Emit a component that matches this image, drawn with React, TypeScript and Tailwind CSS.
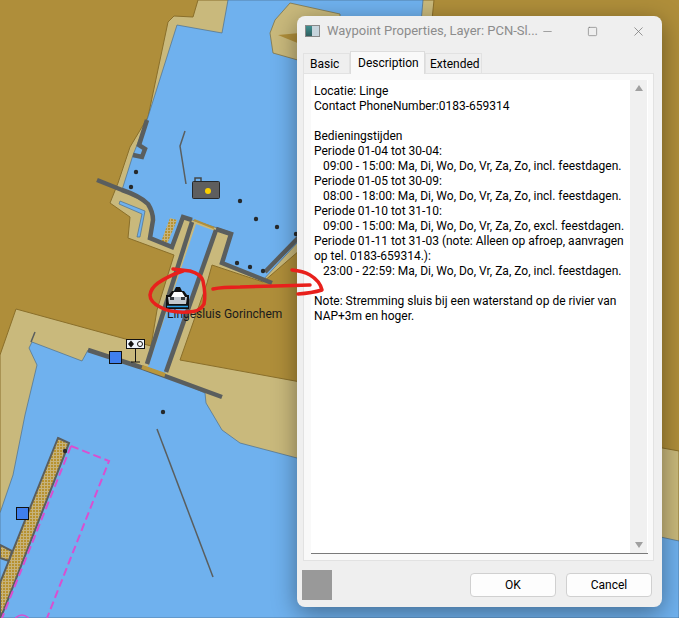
import { Minus, Square, X } from "lucide-react"

const lines = [
  "Locatie: Linge",
  "Contact PhoneNumber:0183-659314",
  "",
  "Bedieningstijden",
  "Periode 01-04 tot 30-04:",
  "   09:00 - 15:00: Ma, Di, Wo, Do, Vr, Za, Zo, incl. feestdagen.",
  "Periode 01-05 tot 30-09:",
  "   08:00 - 18:00: Ma, Di, Wo, Do, Vr, Za, Zo, incl. feestdagen.",
  "Periode 01-10 tot 31-10:",
  "   09:00 - 15:00: Ma, Di, Wo, Do, Vr, Za, Zo, excl. feestdagen.",
  "Periode 01-11 tot 31-03 (note: Alleen op afroep, aanvragen",
  "op tel. 0183-659314.):",
  "   23:00 - 22:59: Ma, Di, Wo, Do, Vr, Za, Zo, incl. feestdagen.",
  "",
  "Note: Stremming sluis bij een waterstand op de rivier van",
  "NAP+3m en hoger.",
]

const dots = [
  [136, 172], [131, 187], [240, 201], [256, 219], [277, 227], [296, 234],
  [237, 263], [250, 267], [263, 271], [163, 412], [65, 451],
]

function ChartMap() {
  return (
    <svg width="679" height="618" viewBox="0 0 679 618" className="block">
      <defs>
        <pattern id="dredge" width="3" height="3" patternUnits="userSpaceOnUse">
          <rect width="3" height="3" fill="#c6b37c" />
          <rect width="2" height="2" fill="#b8922f" />
        </pattern>
      </defs>
      <rect width="679" height="618" fill="#af8e3a" />

      {/* sand banks */}
      <path
        d="M198 0 L193 17 L174 16 L168 22 L148 117 L130 147 L118 183 L110 203 L130 217 L128 238 L174 255 L157 310 L151 346 L16 309 L0 355 L0 618 L60 618 L222 450 L297 475 L679 560 L679 451 L180 360 L207 283 L212 265 L263 282 L300 250 L425 90 L434 0 Z"
        fill="#c9b97c"
        stroke="#8a6f2a"
        strokeWidth="1"
      />

      {/* water */}
      <path
        d="M228 0 L222 33 L177 25 L147 120 L133 155 L122 190 L150 205 L153 220 L150 238 L172 247 L183 217 L230 232 L222 263 L263 280 L320 218 L416 80 L423 0 Z"
        fill="#6fb1ee"
        stroke="#4c6f8c"
        strokeWidth="0.7"
      />
      <path d="M290 3 L275 20 L270 33 L273 53 L340 72 L340 14 Z" fill="#c9b97c" stroke="#7a6a3a" strokeWidth="0.7" />
      <path d="M278 35 L300 33 L300 44 Z" fill="#af8e3a" />
      <path d="M196 224 L215 231 L165 374 L148 367 Z" fill="#6fb1ee" />
      <path
        d="M32 342 L29 348 L37 365 L25 415 L13 475 L0 513 L0 618 L679 618 L679 541 L297 458 L240 443 L222 430 L206 403 L205 393 L165 375 L140 367 L88 350 L82 361 Z"
        fill="#6fb1ee"
        stroke="#4c6f8c"
        strokeWidth="0.7"
      />
      <path d="M120 201 L145 211 L140 237 L137 237 L142 214 L119 204 Z" fill="#6fb1ee" stroke="#4c6f8c" strokeWidth="0.7" />

      {/* dredged strips */}
      <path d="M0 545 L12 551 L9 561 L0 558 Z" fill="url(#dredge)" stroke="#5a5e5e" strokeWidth="2" />
      <path d="M58 438 L69 443 L3 612 L0 618 L0 583 Z" fill="url(#dredge)" stroke="#5a5e5e" strokeWidth="2" />
      <path d="M170 218 L177 220 L167 244 L161 242 Z" fill="url(#dredge)" />

      {/* quay walls */}
      <g fill="none" stroke="#5a5e5e" strokeWidth="4.500">
        <path d="M147 120 L139 145 L145 149 L142 157 L133 155" />
        <path d="M97 180 L122 190 Q140 196 148 204 Q153 212 153 220 L150 238 L172 247 L183 217 L192 220" />
        <path d="M192 222 L147 364" />
        <path d="M216 230 L166 372" />
        <path d="M216 229 L231 234 L222 263 L272 283" />
        <path d="M265 272 L300 236" />
        <path d="M88 350 L140 367 L222 397" />
      </g>
      <path d="M194 220 L214 228" stroke="#b08f3a" strokeWidth="2" />
      <path d="M142 367 L165 375" stroke="#b9973d" strokeWidth="4" />
      <path d="M35 332 L31 342" stroke="#5a5e5e" strokeWidth="1.500" />
      <path d="M185 131 L180 146 L186 184" fill="none" stroke="#5a5e5e" strokeWidth="1.500" />
      <path d="M157 429 L213 577" stroke="#5a5e5e" strokeWidth="1.500" />

      {dots.map(([cx, cy]) => (
        <circle key={`${cx}-${cy}`} cx={cx} cy={cy} r="2.200" fill="#26292b" />
      ))}

      {/* restricted area */}
      <path d="M71 446 L109 461 L47 618 M71 446 L2 618" fill="none" stroke="#d94fd0" strokeWidth="2" strokeDasharray="8 4" />
      <circle cx="22" cy="623" r="8" fill="none" stroke="#d94fd0" strokeWidth="1.500" />

      {/* camera symbol */}
      <path d="M195 182 V178 H201 V182" fill="none" stroke="#44484a" strokeWidth="1.500" />
      <rect x="192.500" y="181.500" width="27" height="17" rx="1" fill="#5e5e5e" stroke="#26292b" />
      <circle cx="208" cy="191" r="3" fill="#fbd000" />

      {/* blue squares */}
      <rect x="109.500" y="351.500" width="12" height="12" fill="#3f7fee" stroke="#111" />
      <rect x="16.500" y="507.500" width="12" height="12" fill="#3f7fee" stroke="#111" />

      {/* topmark */}
      <path d="M135.500 348 V362 M131 362 H140" stroke="#111" strokeWidth="1" />
      <rect x="126.500" y="339.500" width="18" height="9" fill="#eef4fa" stroke="#111" />
      <path d="M131 340.500 L134 344 L131 347.500 L128 344 Z" fill="#111" />
      <circle cx="140" cy="344" r="2.500" fill="#fff" stroke="#111" />

      {/* ship */}
      <path d="M166 309 V295 H169 L172 291 H174 L176 287 H180 L182 291 H184 L187 295 H189 V309 Z" fill="#111" />
      <path d="M168 297 H187 L186 304 H169 Z" fill="#c4c9cf" />
      <path d="M171 297 L174 292 H182 L185 297 Z" fill="#fff" />
      <path d="M170 297 H174 V300 H170 Z M181 297 H185 V300 H181 Z" fill="#33383c" />
      <path d="M167 306.500 H188" stroke="#2aa0e8" strokeWidth="1.500" />
    </svg>
  )
}

function Dialog() {
  return (
    <div className="absolute left-[297px] top-[16px] flex h-[591px] w-[365px] flex-col rounded-lg bg-[#efefef] shadow-[0_6px_24px_rgba(0,0,0,0.4)] font-['Roboto',sans-serif] text-[12px] text-black">
      <div className="flex h-[30px] items-center pl-[8px] text-[#8c8c8c]">
        <div className="flex h-[12px] w-[15px] border border-[#888] bg-white">
          <div className="w-[6px] bg-gradient-to-b from-[#3f8f8f] to-[#2f5f5f]" />
          <div className="flex-1 bg-[#c6d4dc]" />
        </div>
        <span className="ml-[7px] w-[205px] whitespace-nowrap text-[13px]">Waypoint Properties, Layer: PCN-Sl...</span>
        <Minus className="ml-[9px] h-[13px] w-[13px] text-[#777]" strokeWidth={1.2} />
        <Square className="ml-[33px] h-[11px] w-[11px] text-[#777]" strokeWidth={1.4} />
        <X className="ml-[33px] h-[15px] w-[15px] text-[#777]" strokeWidth={1.2} />
      </div>
      <div className="ml-[6px] mt-[6px] flex h-[21px] items-end">
        <div className="flex h-[20px] w-[47px] items-center border border-b-0 border-[#e2e2e2] pl-[6px]">Basic</div>
        <div className="z-10 -mb-px flex h-[23px] w-[75px] items-start border border-b-0 border-[#dcdcdc] bg-[#f9f9f9] pl-[7px] pt-[2px]">Description</div>
        <div className="flex h-[20px] w-[57px] items-center border border-b-0 border-[#e2e2e2] pl-[4px]">Extended</div>
      </div>
      <div className="ml-[6px] h-[488px] w-[351px] border border-[#e2e2e2] bg-[#f9f9f9] px-[7px] py-[6px]">
        <div className="flex h-[474px] w-[337px] border-b border-[#7a7a7a] bg-white">
          <div className="flex-1 pl-[3px] pt-[4px] leading-[15px] whitespace-pre">
            {lines.map((line, i) => (
              <div key={i} className="h-[15px]">{line}</div>
            ))}
          </div>
          <div className="mr-px flex w-[17px] flex-col items-center justify-between bg-[#f0f0f0] py-[5px]">
            <div className="h-0 w-0 border-x-[4px] border-b-[6px] border-x-transparent border-b-[#a0a0a0]" />
            <div className="h-0 w-0 border-x-[4px] border-t-[6px] border-x-transparent border-t-[#a0a0a0]" />
          </div>
        </div>
      </div>
      <div className="flex flex-1 items-center pl-[5px] pr-[10px] pt-[1px]">
        <div className="h-[30px] w-[30px] bg-[#999999]" />
        <button className="ml-auto h-[24px] w-[86px] rounded-[4px] border border-[#d0d0d0] bg-[#fdfdfd]">OK</button>
        <button className="ml-[10px] h-[24px] w-[86px] rounded-[4px] border border-[#d0d0d0] bg-[#fdfdfd]">Cancel</button>
      </div>
    </div>
  )
}

export default function App() {
  return (
    <div className="relative h-[618px] w-[679px] overflow-hidden">
      <ChartMap />
      <span className="absolute left-[167px] top-[306px] font-['Roboto',sans-serif] text-[12px] leading-[17px] text-[#1a1a1a]">
        Lingesluis Gorinchem
      </span>
      <Dialog />
      {/* hand drawn red annotation */}
      <svg width="679" height="618" viewBox="0 0 679 618" className="absolute left-0 top-0">
        <g fill="none" stroke="#e8201c" strokeWidth="3.500" strokeLinecap="round" strokeLinejoin="round">
          <path d="M173 269 L190 271 Q201 274 203 281 Q206 295 204 304 Q200 312 188 312 Q170 313 160 307 Q150 302 150 295 Q151 288 158 283 Q170 275 183 271" />
          <path d="M213 289 Q222 287 240 287 L275 286 L310 285" />
          <path d="M292 270 Q303 271 310 275 Q320 281 322 290 Q312 293 298 294" />
        </g>
      </svg>
    </div>
  )
}
